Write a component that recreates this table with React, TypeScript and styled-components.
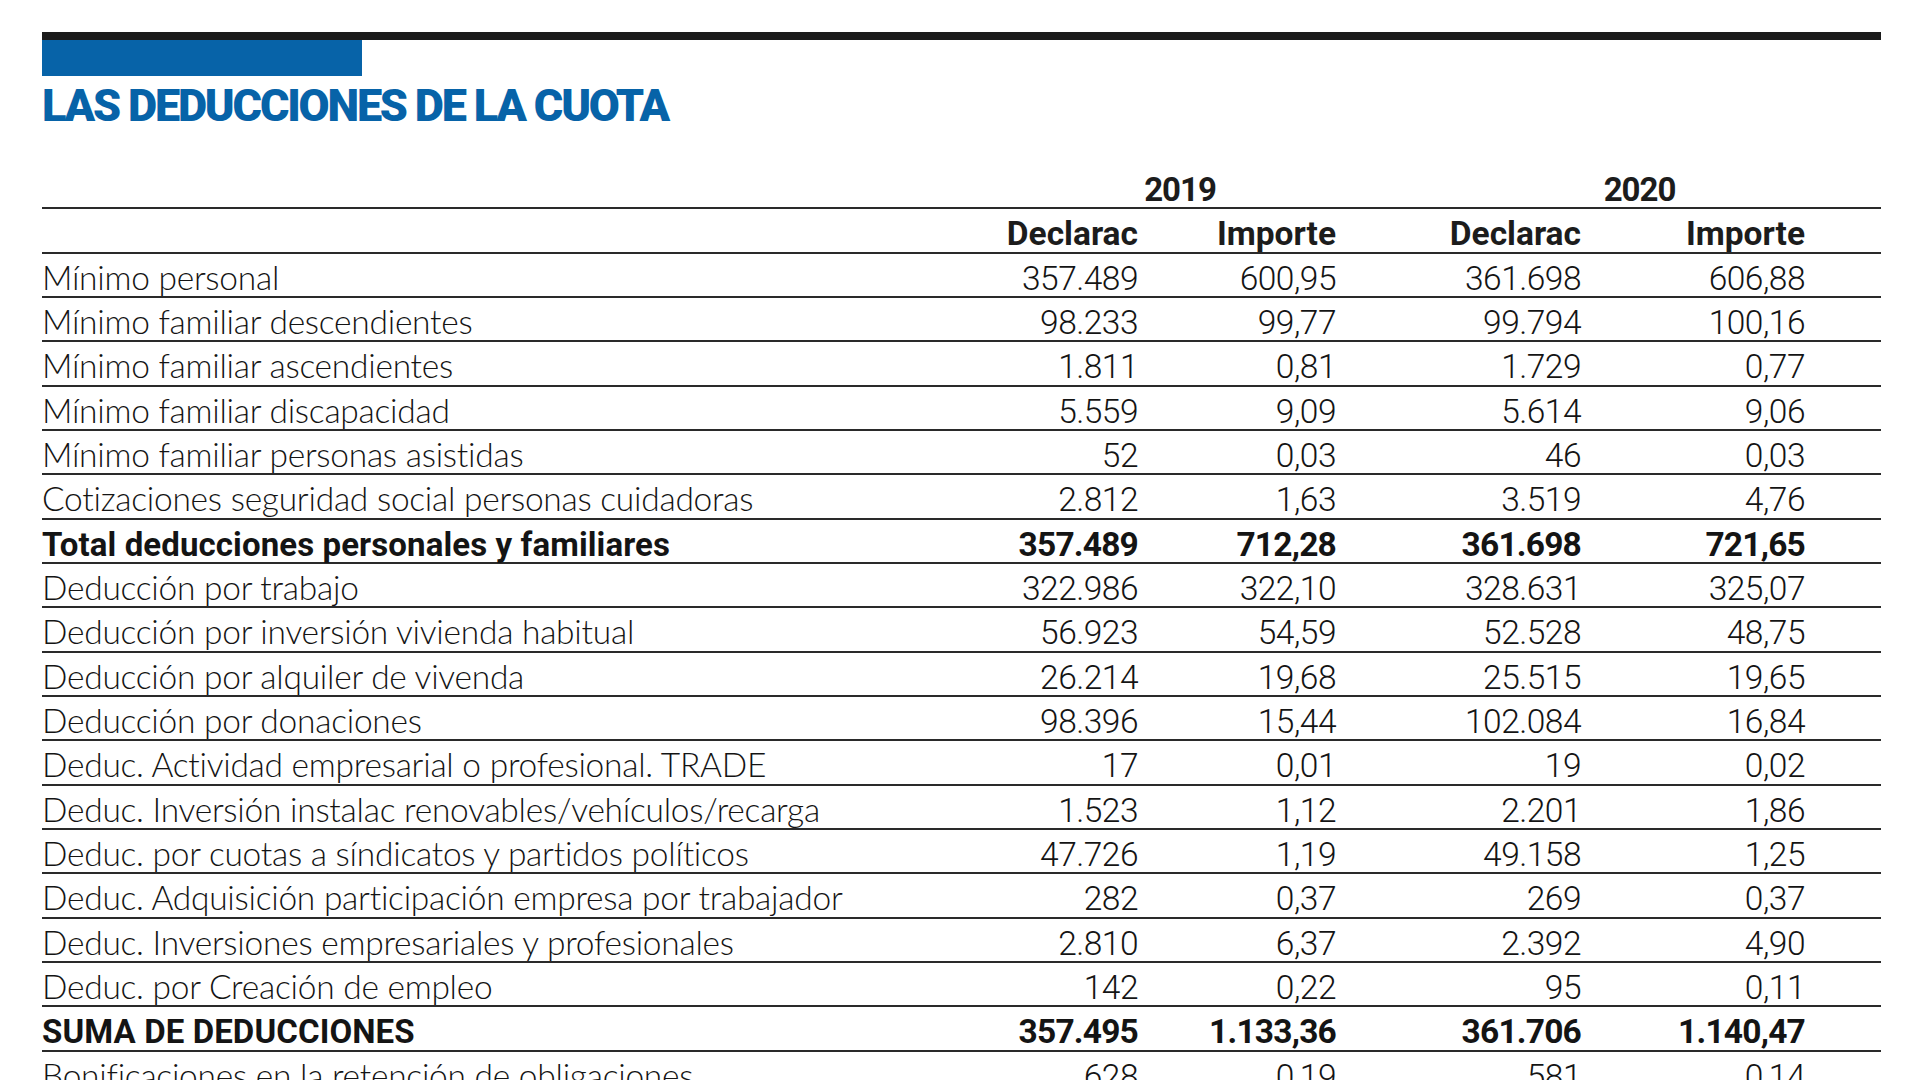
import React from "react";
import styled, { createGlobalStyle } from "styled-components";

const Global = createGlobalStyle`
  html, body { margin: 0; padding: 0; background: #ffffff; }
  body { font-family: "Lato", "Liberation Sans", sans-serif; color: #1f1f1f; }
`;

const Page = styled.div`
  padding: 32px 39px 0 42px;
  background: #ffffff;
`;

const TopRule = styled.div`
  height: 8px;
  background: #1b1b1b;
`;

const BlueTab = styled.div`
  width: 320px;
  height: 36px;
  background: #0763a8;
`;

const TitleBlock = styled.div`
  height: 89px;
  box-sizing: border-box;
  padding-top: 6px;
`;

const Title = styled.h1`
  margin: 0;
  font-family: "Roboto", "Liberation Sans", sans-serif;
  font-weight: 900;
  font-size: 45px;
  line-height: 48px;
  letter-spacing: -2.2px;
  color: #0763a8;
`;

const Table = styled.div`
  display: flex;
  flex-direction: column;
`;

const Row = styled.div`
  display: grid;
  grid-template-columns: 896px 200px 198px 245px 224px 76px;
  height: 44.33px;
  box-sizing: border-box;
  padding-top: 4px;
  border-bottom: 2px solid #2a2a2a;
  align-items: start;
`;

const YearCell = styled.div<{ $col: string; $shift: number }>`
  grid-column: ${(p) => p.$col};
  text-align: center;
  padding-left: ${(p) => p.$shift}px;
  font-family: "Roboto", "Liberation Sans", sans-serif;
  font-weight: 700;
  font-size: 33px;
  line-height: 42px;
  letter-spacing: -1px;
  color: #1c1c1c;
`;

const HeadCell = styled.div`
  text-align: right;
  font-family: "Roboto", "Liberation Sans", sans-serif;
  font-weight: 700;
  font-size: 33.5px;
  line-height: 42px;
  letter-spacing: 0px;
  color: #1c1c1c;
`;

const Label = styled.div<{ $bold?: boolean }>`
  font-family: ${(p) =>
    p.$bold ? '"Roboto", "Liberation Sans", sans-serif' : '"Lato", "Liberation Sans", sans-serif'};
  font-weight: ${(p) => (p.$bold ? 700 : 300)};
  font-size: ${(p) => (p.$bold ? "33px" : "33.5px")};
  letter-spacing: ${(p) => (p.$bold ? "0.1px" : "-0.25px")};
  line-height: ${(p) => (p.$bold ? "42px" : "39px")};
  white-space: nowrap;
  color: #141414;
`;

const Num = styled.div<{ $bold?: boolean }>`
  text-align: right;
  font-family: "Roboto", "Liberation Sans", sans-serif;
  font-weight: ${(p) => (p.$bold ? 700 : 300)};
  font-size: 33.5px;
  line-height: 42px;
  letter-spacing: ${(p) => (p.$bold ? "-0.8px" : "-0.5px")};
  white-space: nowrap;
  color: #141414;
`;

type Line = { label: string; v: [string, string, string, string]; bold?: boolean };

const rows: Line[] = [
  { label: "Mínimo personal", v: ["357.489", "600,95", "361.698", "606,88"] },
  { label: "Mínimo familiar descendientes", v: ["98.233", "99,77", "99.794", "100,16"] },
  { label: "Mínimo familiar ascendientes", v: ["1.811", "0,81", "1.729", "0,77"] },
  { label: "Mínimo familiar discapacidad", v: ["5.559", "9,09", "5.614", "9,06"] },
  { label: "Mínimo familiar personas asistidas", v: ["52", "0,03", "46", "0,03"] },
  { label: "Cotizaciones seguridad social personas cuidadoras", v: ["2.812", "1,63", "3.519", "4,76"] },
  { label: "Total deducciones personales y familiares", v: ["357.489", "712,28", "361.698", "721,65"], bold: true },
  { label: "Deducción por trabajo", v: ["322.986", "322,10", "328.631", "325,07"] },
  { label: "Deducción por inversión vivienda habitual", v: ["56.923", "54,59", "52.528", "48,75"] },
  { label: "Deducción por alquiler de vivenda", v: ["26.214", "19,68", "25.515", "19,65"] },
  { label: "Deducción por donaciones", v: ["98.396", "15,44", "102.084", "16,84"] },
  { label: "Deduc. Actividad empresarial o profesional. TRADE", v: ["17", "0,01", "19", "0,02"] },
  { label: "Deduc. Inversión instalac renovables/vehículos/recarga", v: ["1.523", "1,12", "2.201", "1,86"] },
  { label: "Deduc. por cuotas a síndicatos y partidos políticos", v: ["47.726", "1,19", "49.158", "1,25"] },
  { label: "Deduc. Adquisición participación empresa por trabajador", v: ["282", "0,37", "269", "0,37"] },
  { label: "Deduc. Inversiones empresariales y profesionales", v: ["2.810", "6,37", "2.392", "4,90"] },
  { label: "Deduc. por Creación de empleo", v: ["142", "0,22", "95", "0,11"] },
  { label: "SUMA DE DEDUCCIONES", v: ["357.495", "1.133,36", "361.706", "1.140,47"], bold: true },
  { label: "Bonificaciones en la retención de obligaciones", v: ["628", "0,19", "581", "0,14"] },
];

export default function App() {
  return (
    <Page>
      <Global />
      <TopRule />
      <BlueTab />
      <TitleBlock>
        <Title>LAS DEDUCCIONES DE LA CUOTA</Title>
      </TitleBlock>
      <Table>
        <Row>
          <div />
          <YearCell $col="2 / span 2" $shift={86}>2019</YearCell>
          <YearCell $col="4 / span 3" $shift={62}>2020</YearCell>
        </Row>
        <Row>
          <div />
          <HeadCell>Declarac</HeadCell>
          <HeadCell>Importe</HeadCell>
          <HeadCell>Declarac</HeadCell>
          <HeadCell>Importe</HeadCell>
        </Row>
        {rows.map((r) => (
          <Row key={r.label}>
            <Label $bold={r.bold}>{r.label}</Label>
            {r.v.map((n, i) => (
              <Num key={i} $bold={r.bold}>
                {n}
              </Num>
            ))}
          </Row>
        ))}
      </Table>
    </Page>
  );
}
